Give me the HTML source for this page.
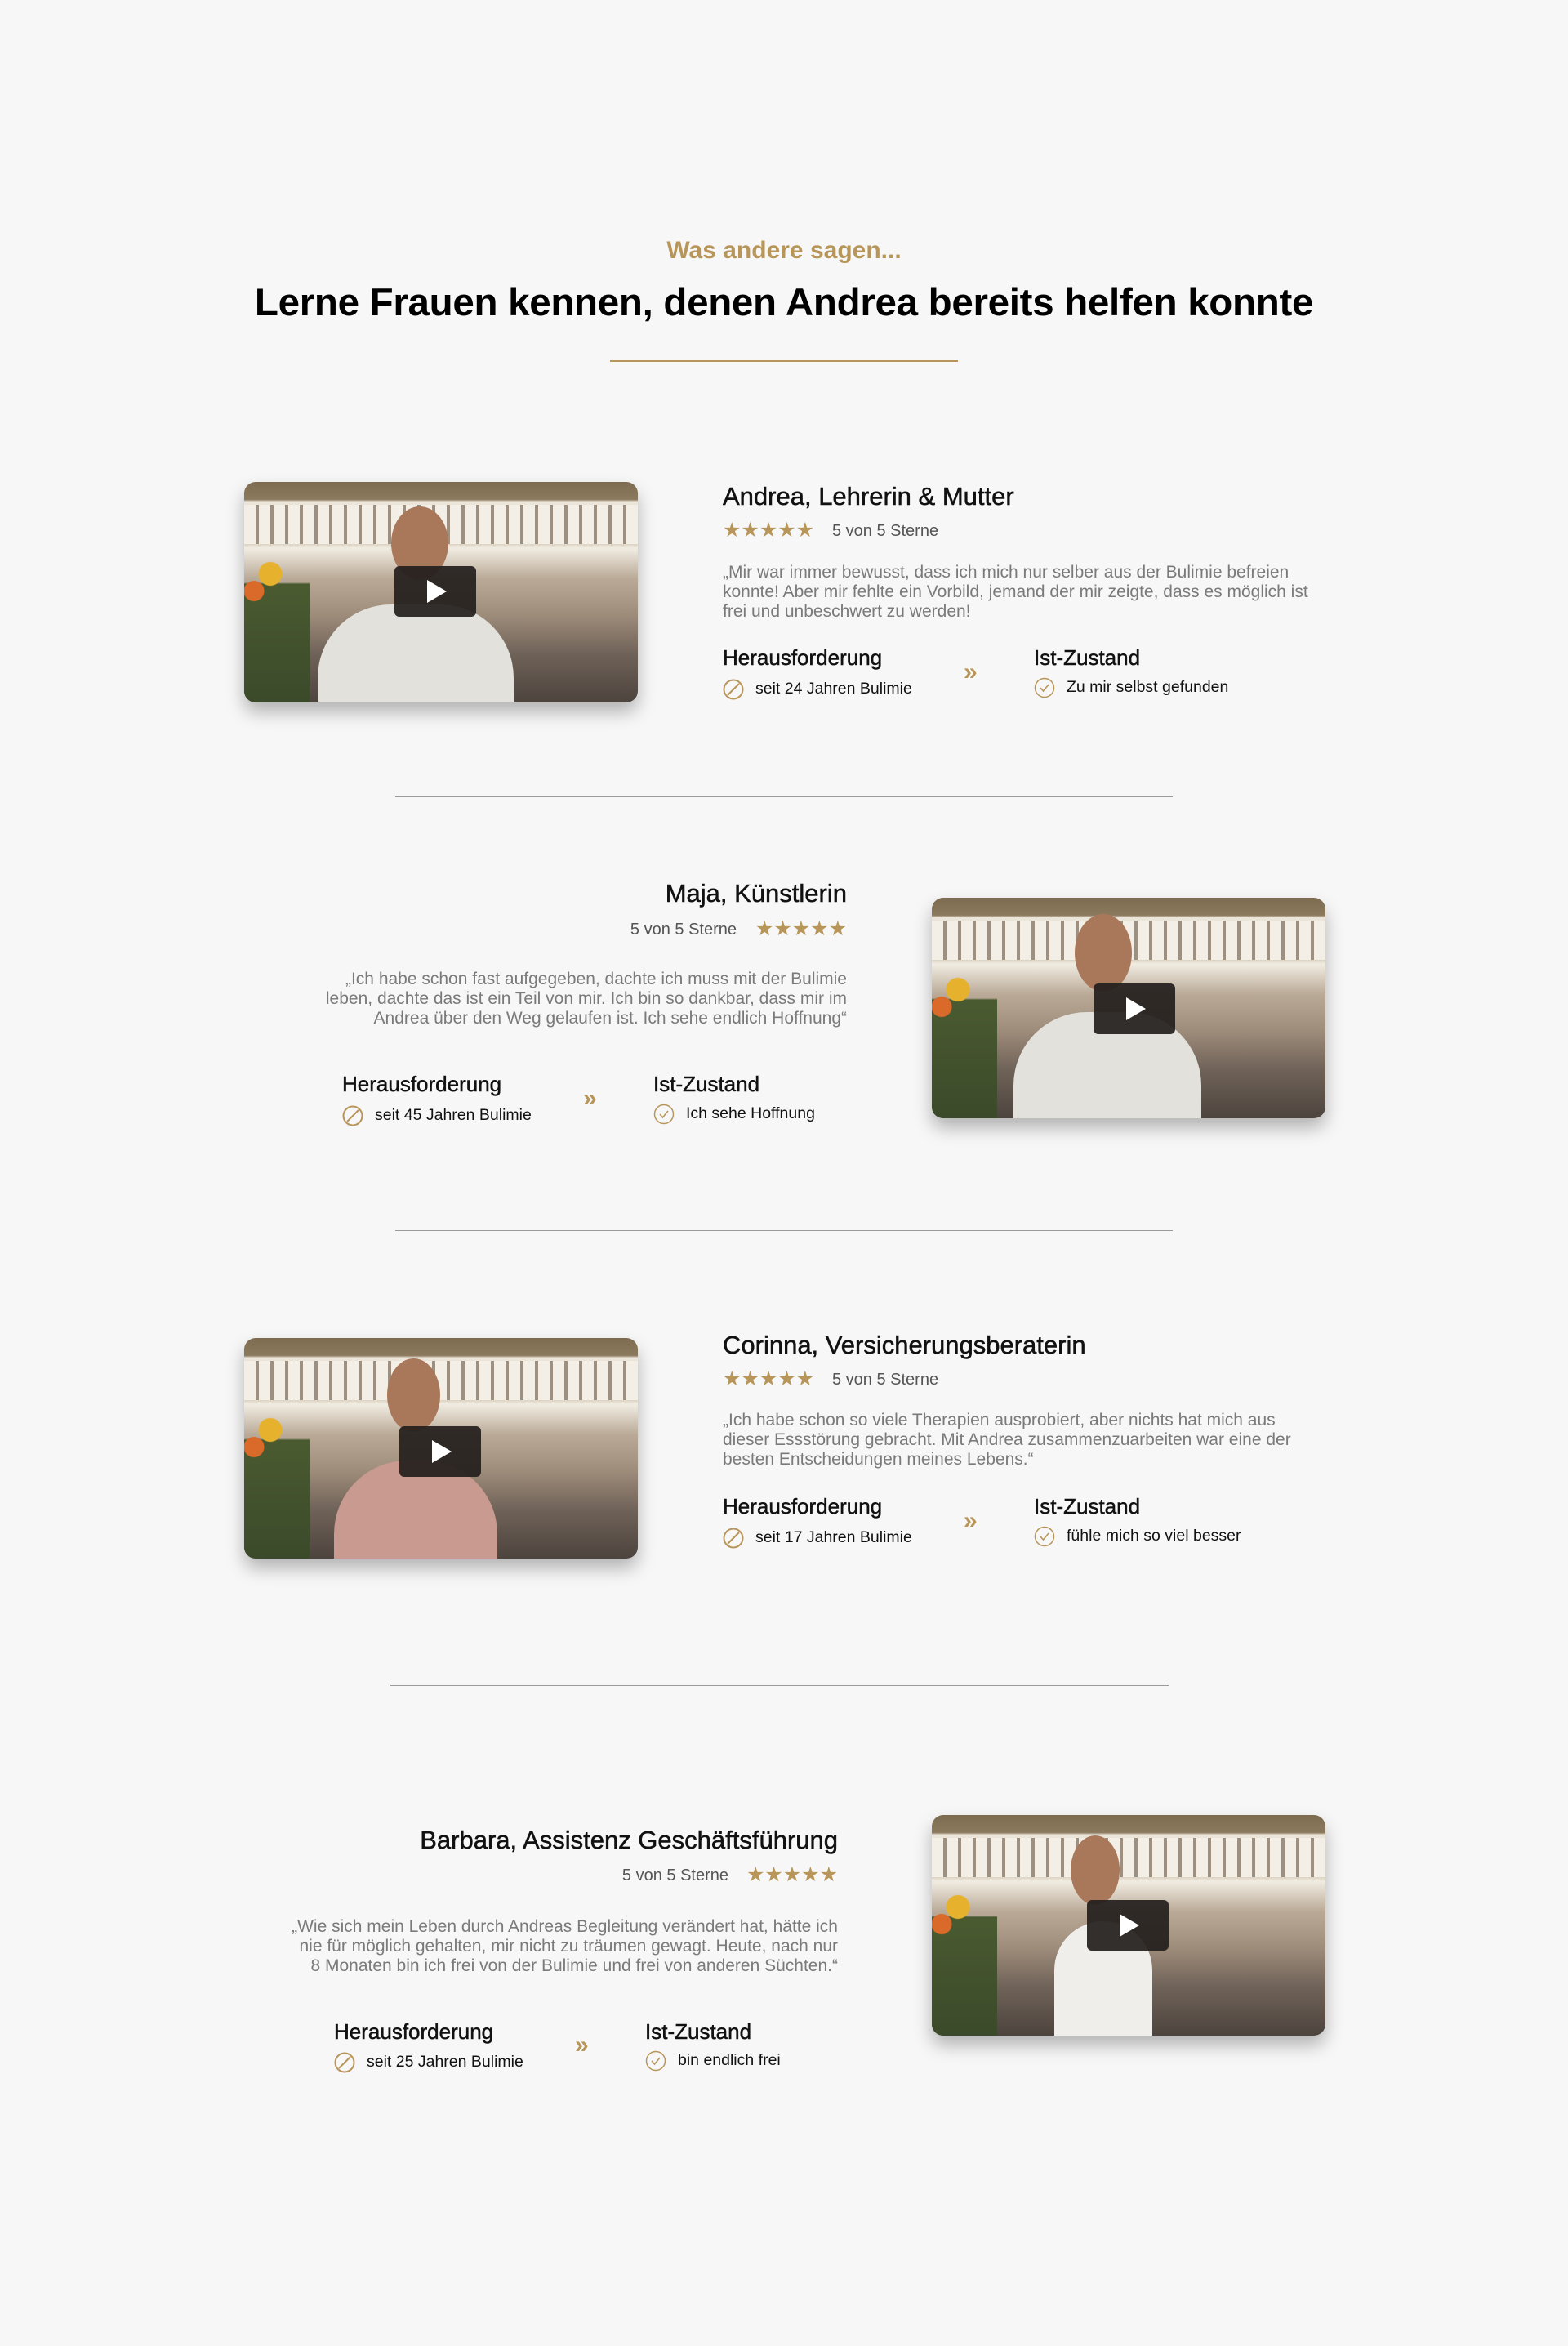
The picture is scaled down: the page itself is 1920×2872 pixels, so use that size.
<!DOCTYPE html>
<html><head><meta charset="utf-8"><style>
*{margin:0;padding:0;box-sizing:border-box}
body{width:1920px;height:2872px;background:#f7f7f7;font-family:"Liberation Sans",Arial,sans-serif;position:relative;overflow:hidden;color:#111}
.a{position:absolute;white-space:nowrap}
.sub{left:0;width:1920px;text-align:center;top:290px;font-size:30px;font-weight:bold;color:#b8965a}
.h{left:0;width:1920px;text-align:center;top:343px;font-size:47.5px;font-weight:bold;letter-spacing:-0.3px;color:#000}
.gl{left:747px;top:441px;width:426px;height:2px;background:#b8965a}
.div{height:1px;background:#9a9a9a}
.vid{position:absolute;width:482px;height:270px;border-radius:14px;overflow:hidden;box-shadow:0 12px 22px rgba(0,0,0,.28);
background:linear-gradient(180deg,#7d6b50 0%,#8c7a5e 8%,#ece6da 9%,#d9d0bf 28%,#f1ece2 30%,#b9a996 44%,#9f8d7b 60%,#6f6258 78%,#4d443e 100%)}
.vid .cols{position:absolute;left:0;right:0;top:28px;height:48px;background:repeating-linear-gradient(90deg,#f3efe6 0 14px,#9e9080 14px 18px)}
.vid .flw{position:absolute;left:0;top:60px;width:80px;height:210px;background:radial-gradient(circle at 40% 25%,#e6b22e 0 14px,transparent 15px),radial-gradient(circle at 15% 35%,#d96a2a 0 12px,transparent 13px),linear-gradient(180deg,transparent 30%,#4a5a30 31%,#3b4a2a 100%)}
.vid .p{position:absolute;background:#e3e1dc;border-radius:90px 90px 0 0}
.vid .hd{position:absolute;background:#a9785a;border-radius:50%}
.play{position:absolute;width:100px;height:62px;background:rgba(35,30,28,.92);border-radius:6px}
.play:after{content:"";position:absolute;left:40px;top:17px;border-left:24px solid #fff;border-top:14px solid transparent;border-bottom:14px solid transparent}
.nm{font-size:31px;-webkit-text-stroke:0.5px #111}
.st{color:#b8965a;font-size:25px;letter-spacing:0px}
.sv{font-size:20px;color:#555}
.q{font-size:21px;color:#7a7a7a;line-height:24px}
.hh{font-size:26px;-webkit-text-stroke:0.5px #111}
.it{font-size:19.5px}
.ico{display:inline-block;width:26px;height:26px;vertical-align:middle;margin-right:14px}
.ar{color:#b8965a;font-size:30px;font-weight:bold}
</style></head><body>
<div class="a sub">Was andere sagen...</div>
<div class="a h">Lerne Frauen kennen, denen Andrea bereits helfen konnte</div>
<div class="a gl"></div>

<!-- card 1 -->
<div class="vid" style="left:299px;top:590px"><div class="cols"></div><div class="flw"></div>
<div class="p" style="left:90px;top:150px;width:240px;height:130px"></div><div class="hd" style="left:180px;top:30px;width:70px;height:90px"></div>
<div class="play" style="left:184px;top:103px"></div></div>
<div class="a nm" style="left:885px;top:590px">Andrea, Lehrerin &amp; Mutter</div>
<div class="a st" style="left:885px;top:634px">★★★★★</div>
<div class="a sv" style="left:1019px;top:639px">5 von 5 Sterne</div>
<div class="a q" style="left:885px;top:689px">„Mir war immer bewusst, dass ich mich nur selber aus der Bulimie befreien<br>konnte! Aber mir fehlte ein Vorbild, jemand der mir zeigte, dass es möglich ist<br>frei und unbeschwert zu werden!</div>
<div class="a hh" style="left:885px;top:790px">Herausforderung</div>
<div class="a it" style="left:885px;top:831px"><svg class="ico" viewBox="0 0 26 26"><circle cx="13" cy="13" r="11.5" fill="none" stroke="#b8965a" stroke-width="2"/><line x1="6" y1="20" x2="20" y2="6" stroke="#b8965a" stroke-width="2"/></svg>seit 24 Jahren Bulimie</div>
<div class="a ar" style="left:1180px;top:806px">»</div>
<div class="a hh" style="left:1266px;top:790px">Ist-Zustand</div>
<div class="a it" style="left:1266px;top:829px"><svg class="ico" viewBox="0 0 26 26"><circle cx="13" cy="13" r="11.5" fill="none" stroke="#b8965a" stroke-width="1.5"/><path d="M8 13l3.5 4L18 9" fill="none" stroke="#b8965a" stroke-width="1.6"/></svg>Zu mir selbst gefunden</div>
<div class="a div" style="left:484px;top:975px;width:952px"></div>

<!-- card 2 -->
<div class="a nm" style="right:883px;top:1076px">Maja, Künstlerin</div>
<div class="a st" style="right:883px;top:1122px">★★★★★</div>
<div class="a sv" style="right:1018px;top:1127px">5 von 5 Sterne</div>
<div class="a q" style="right:883px;top:1187px;text-align:right">„Ich habe schon fast aufgegeben, dachte ich muss mit der Bulimie<br>leben, dachte das ist ein Teil von mir. Ich bin so dankbar, dass mir im<br>Andrea über den Weg gelaufen ist. Ich sehe endlich Hoffnung“</div>
<div class="a hh" style="left:419px;top:1312px">Herausforderung</div>
<div class="a it" style="left:419px;top:1353px"><svg class="ico" viewBox="0 0 26 26"><circle cx="13" cy="13" r="11.5" fill="none" stroke="#b8965a" stroke-width="2"/><line x1="6" y1="20" x2="20" y2="6" stroke="#b8965a" stroke-width="2"/></svg>seit 45 Jahren Bulimie</div>
<div class="a ar" style="left:714px;top:1328px">»</div>
<div class="a hh" style="left:800px;top:1312px">Ist-Zustand</div>
<div class="a it" style="left:800px;top:1351px"><svg class="ico" viewBox="0 0 26 26"><circle cx="13" cy="13" r="11.5" fill="none" stroke="#b8965a" stroke-width="1.5"/><path d="M8 13l3.5 4L18 9" fill="none" stroke="#b8965a" stroke-width="1.6"/></svg>Ich sehe Hoffnung</div>
<div class="vid" style="left:1141px;top:1099px"><div class="cols"></div><div class="flw"></div>
<div class="p" style="left:100px;top:140px;width:230px;height:140px"></div><div class="hd" style="left:175px;top:20px;width:70px;height:95px"></div>
<div class="play" style="left:198px;top:105px"></div></div>
<div class="a div" style="left:484px;top:1506px;width:952px"></div>

<!-- card 3 -->
<div class="vid" style="left:299px;top:1638px"><div class="cols"></div><div class="flw"></div>
<div class="p" style="left:110px;top:150px;width:200px;height:130px;background:#c99a8f"></div><div class="hd" style="left:175px;top:25px;width:65px;height:90px"></div>
<div class="play" style="left:190px;top:108px"></div></div>
<div class="a nm" style="left:885px;top:1629px">Corinna, Versicherungsberaterin</div>
<div class="a st" style="left:885px;top:1673px">★★★★★</div>
<div class="a sv" style="left:1019px;top:1678px">5 von 5 Sterne</div>
<div class="a q" style="left:885px;top:1727px">„Ich habe schon so viele Therapien ausprobiert, aber nichts hat mich aus<br>dieser Essstörung gebracht. Mit Andrea zusammenzuarbeiten war eine der<br>besten Entscheidungen meines Lebens.“</div>
<div class="a hh" style="left:885px;top:1829px">Herausforderung</div>
<div class="a it" style="left:885px;top:1870px"><svg class="ico" viewBox="0 0 26 26"><circle cx="13" cy="13" r="11.5" fill="none" stroke="#b8965a" stroke-width="2"/><line x1="6" y1="20" x2="20" y2="6" stroke="#b8965a" stroke-width="2"/></svg>seit 17 Jahren Bulimie</div>
<div class="a ar" style="left:1180px;top:1845px">»</div>
<div class="a hh" style="left:1266px;top:1829px">Ist-Zustand</div>
<div class="a it" style="left:1266px;top:1868px"><svg class="ico" viewBox="0 0 26 26"><circle cx="13" cy="13" r="11.5" fill="none" stroke="#b8965a" stroke-width="1.5"/><path d="M8 13l3.5 4L18 9" fill="none" stroke="#b8965a" stroke-width="1.6"/></svg>fühle mich so viel besser</div>
<div class="a div" style="left:478px;top:2063px;width:953px"></div>

<!-- card 4 -->
<div class="a nm" style="right:894px;top:2235px">Barbara, Assistenz Geschäftsführung</div>
<div class="a st" style="right:894px;top:2280px">★★★★★</div>
<div class="a sv" style="right:1028px;top:2285px">5 von 5 Sterne</div>
<div class="a q" style="right:894px;top:2347px;text-align:right">„Wie sich mein Leben durch Andreas Begleitung verändert hat, hätte ich<br>nie für möglich gehalten, mir nicht zu träumen gewagt. Heute, nach nur<br>8 Monaten bin ich frei von der Bulimie und frei von anderen Süchten.“</div>
<div class="a hh" style="left:409px;top:2472px">Herausforderung</div>
<div class="a it" style="left:409px;top:2512px"><svg class="ico" viewBox="0 0 26 26"><circle cx="13" cy="13" r="11.5" fill="none" stroke="#b8965a" stroke-width="2"/><line x1="6" y1="20" x2="20" y2="6" stroke="#b8965a" stroke-width="2"/></svg>seit 25 Jahren Bulimie</div>
<div class="a ar" style="left:704px;top:2487px">»</div>
<div class="a hh" style="left:790px;top:2472px">Ist-Zustand</div>
<div class="a it" style="left:790px;top:2510px"><svg class="ico" viewBox="0 0 26 26"><circle cx="13" cy="13" r="11.5" fill="none" stroke="#b8965a" stroke-width="1.5"/><path d="M8 13l3.5 4L18 9" fill="none" stroke="#b8965a" stroke-width="1.6"/></svg>bin endlich frei</div>
<div class="vid" style="left:1141px;top:2222px"><div class="cols"></div><div class="flw"></div>
<div class="p" style="left:150px;top:130px;width:120px;height:150px;background:#f0eeea"></div><div class="hd" style="left:170px;top:25px;width:60px;height:85px"></div>
<div class="play" style="left:190px;top:104px"></div></div>
</body></html>
